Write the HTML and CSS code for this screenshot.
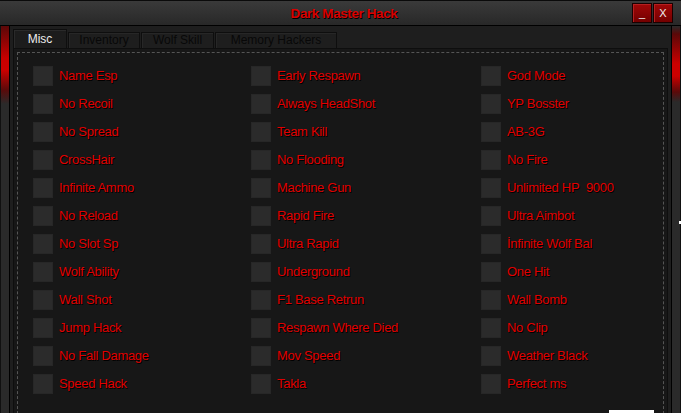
FILE: index.html
```html
<!DOCTYPE html>
<html>
<head>
<meta charset="utf-8">
<link rel="stylesheet" href="styles.css">
</head>
<body>
<div class="window">
  <div class="titlebar">
    <div class="title">Dark Master Hack</div>
    <div class="tbtn">_</div>
    <div class="tbtn">X</div>
  </div>
  <div class="main">
    <div class="edge edge-l"></div>
    <div class="content">
      <div class="tabs">
        <div class="tab active t-misc">Misc</div>
        <div class="tab t-inv">Inventory</div>
        <div class="tab t-wolf">Wolf Skill</div>
        <div class="tab t-mem">Memory Hackers</div>
      </div>
      <div class="panel">
        <div class="page">
          <div class="grid">
            <label class="item"><span class="box"></span><span class="txt">Name Esp</span></label>
            <label class="item"><span class="box"></span><span class="txt">Early Respawn</span></label>
            <label class="item"><span class="box"></span><span class="txt">God Mode</span></label>
            <label class="item"><span class="box"></span><span class="txt">No Recoil</span></label>
            <label class="item"><span class="box"></span><span class="txt">Always HeadShot</span></label>
            <label class="item"><span class="box"></span><span class="txt">YP Bosster</span></label>
            <label class="item"><span class="box"></span><span class="txt">No Spread</span></label>
            <label class="item"><span class="box"></span><span class="txt">Team Kill</span></label>
            <label class="item"><span class="box"></span><span class="txt">AB-3G</span></label>
            <label class="item"><span class="box"></span><span class="txt">CrossHair</span></label>
            <label class="item"><span class="box"></span><span class="txt">No Flooding</span></label>
            <label class="item"><span class="box"></span><span class="txt">No Fire</span></label>
            <label class="item"><span class="box"></span><span class="txt">Infinite Ammo</span></label>
            <label class="item"><span class="box"></span><span class="txt">Machine Gun</span></label>
            <label class="item"><span class="box"></span><span class="txt">Unlimited HP&nbsp; 9000</span></label>
            <label class="item"><span class="box"></span><span class="txt">No Reload</span></label>
            <label class="item"><span class="box"></span><span class="txt">Rapid Fire</span></label>
            <label class="item"><span class="box"></span><span class="txt">Ultra Aimbot</span></label>
            <label class="item"><span class="box"></span><span class="txt">No Slot Sp</span></label>
            <label class="item"><span class="box"></span><span class="txt">Ultra Rapid</span></label>
            <label class="item"><span class="box"></span><span class="txt">İnfinite Wolf Bal</span></label>
            <label class="item"><span class="box"></span><span class="txt">Wolf Ability</span></label>
            <label class="item"><span class="box"></span><span class="txt">Underground</span></label>
            <label class="item"><span class="box"></span><span class="txt">One Hit</span></label>
            <label class="item"><span class="box"></span><span class="txt">Wall Shot</span></label>
            <label class="item"><span class="box"></span><span class="txt">F1 Base Retrun</span></label>
            <label class="item"><span class="box"></span><span class="txt">Wall Bomb</span></label>
            <label class="item"><span class="box"></span><span class="txt">Jump Hack</span></label>
            <label class="item"><span class="box"></span><span class="txt">Respawn Where Died</span></label>
            <label class="item"><span class="box"></span><span class="txt">No Clip</span></label>
            <label class="item"><span class="box"></span><span class="txt">No Fall Damage</span></label>
            <label class="item"><span class="box"></span><span class="txt">Mov Speed</span></label>
            <label class="item"><span class="box"></span><span class="txt">Weather Black</span></label>
            <label class="item"><span class="box"></span><span class="txt">Speed Hack</span></label>
            <label class="item"><span class="box"></span><span class="txt">Takla</span></label>
            <label class="item"><span class="box"></span><span class="txt">Perfect ms</span></label>
          </div>
          <div class="actions"><div class="wbtn"></div></div>
        </div>
      </div>
    </div>
    <div class="edge edge-r"><span class="tick"></span></div>
  </div>
</div>
</body>
</html>
```

FILE: styles.css
```css
html, body {
  margin: 0;
  padding: 0;
}
body {
  width: 681px;
  height: 413px;
  overflow: hidden;
  background: #1e1e1e;
  font-family: "Liberation Sans", Arial, sans-serif;
}
.window {
  display: flex;
  flex-direction: column;
  width: 681px;
  height: 413px;
}
.titlebar {
  height: 24px;
  border-top: 1px solid #0a0a0a;
  border-bottom: 1px solid #000;
  background: linear-gradient(#3a3a3a, #282828);
  display: flex;
  align-items: center;
  padding-right: 8px;
  flex: none;
}
.title {
  flex: 1;
  text-align: center;
  padding-left: 57px;
  color: #d80000;
  font-weight: bold;
  font-size: 13.5px;
  letter-spacing: -0.4px;
  text-shadow: 1px 1px 0 #000;
}
.tbtn {
  width: 18px;
  height: 18px;
  margin-left: 1px;
  border: 1px solid #1a0000;
  background: linear-gradient(#a00808, #740000);
  color: #f0f0f0;
  font-size: 11px;
  line-height: 18px;
  text-align: center;
  box-shadow: inset 1px 1px 0 #b52020;
}
.main {
  flex: 1;
  display: flex;
  min-height: 0;
}
.edge {
  width: 8px;
  flex: none;
  background: linear-gradient(#5a0808 0px, #c80000 32px, #cc0000 44px, #5a0a0a 64px, #2a2a2a 78px, #2a2a2a 100%);
}
.edge-l {
  border-left: 1px solid #101010;
  border-right: 1px solid #000;
}
.edge-r {
  position: relative;
  border-left: 1px solid #000;
  border-right: 1px solid #111;
  background: linear-gradient(#2a2a2a 0px, #5a0808 8px, #cc0000 38px, #cc0000 50px, #5a0a0a 66px, #2a2a2a 76px, #2a2a2a 100%);
}
.tick {
  position: absolute;
  right: -1px;
  top: 195px;
  width: 2px;
  height: 3px;
  background: #fff;
}
.content {
  flex: 1;
  padding: 3px 3px 0 3px;
  display: flex;
  flex-direction: column;
  min-width: 0;
}
.tabs {
  display: flex;
  align-items: flex-end;
  height: 19px;
  flex: none;
}
.tab {
  box-sizing: border-box;
  height: 16px;
  border: 1px solid #0e0e0e;
  border-bottom: none;
  background: #1e1e1e;
  box-shadow: inset 1px 1px 0 #272727;
  color: #080808;
  font-size: 12px;
  line-height: 15px;
  text-align: center;
  margin-right: 1px;
}
.t-misc { width: 54px; }
.t-inv { width: 72px; }
.t-wolf { width: 73px; }
.t-mem { width: 122px; }
.tab.active {
  height: 19px;
  line-height: 18px;
  color: #ececec;
  background: #1c1c1c;
  box-shadow: inset 1px 1px 0 #2a2a2a;
}
.panel {
  flex: 1;
  border: 1px solid #0e0e0e;
  background: #171717;
  padding: 3px;
  display: flex;
  flex-direction: column;
}
.page {
  flex: 1;
  border: 1px dashed #555;
  padding: 13px 0 0 15px;
}
.grid {
  display: grid;
  grid-template-columns: 218px 230px 1fr;
  grid-auto-rows: 20px;
  row-gap: 8px;
}
.item {
  display: flex;
  align-items: center;
  gap: 6px;
  color: #e00000;
  font-size: 13px;
  letter-spacing: -0.3px;
  text-shadow: 1px 1px 0 #000;
  white-space: nowrap;
}
.txt {
  padding-bottom: 2px;
}
.box {
  width: 20px;
  height: 20px;
  flex: none;
  background: #2b2b2b;
  box-shadow: inset 0 0 0 1px #272727;
}
.actions {
  display: flex;
  justify-content: flex-end;
  padding-right: 9px;
  margin-top: 16px;
}
.wbtn {
  width: 45px;
  height: 23px;
  background: #fff;
}
```
